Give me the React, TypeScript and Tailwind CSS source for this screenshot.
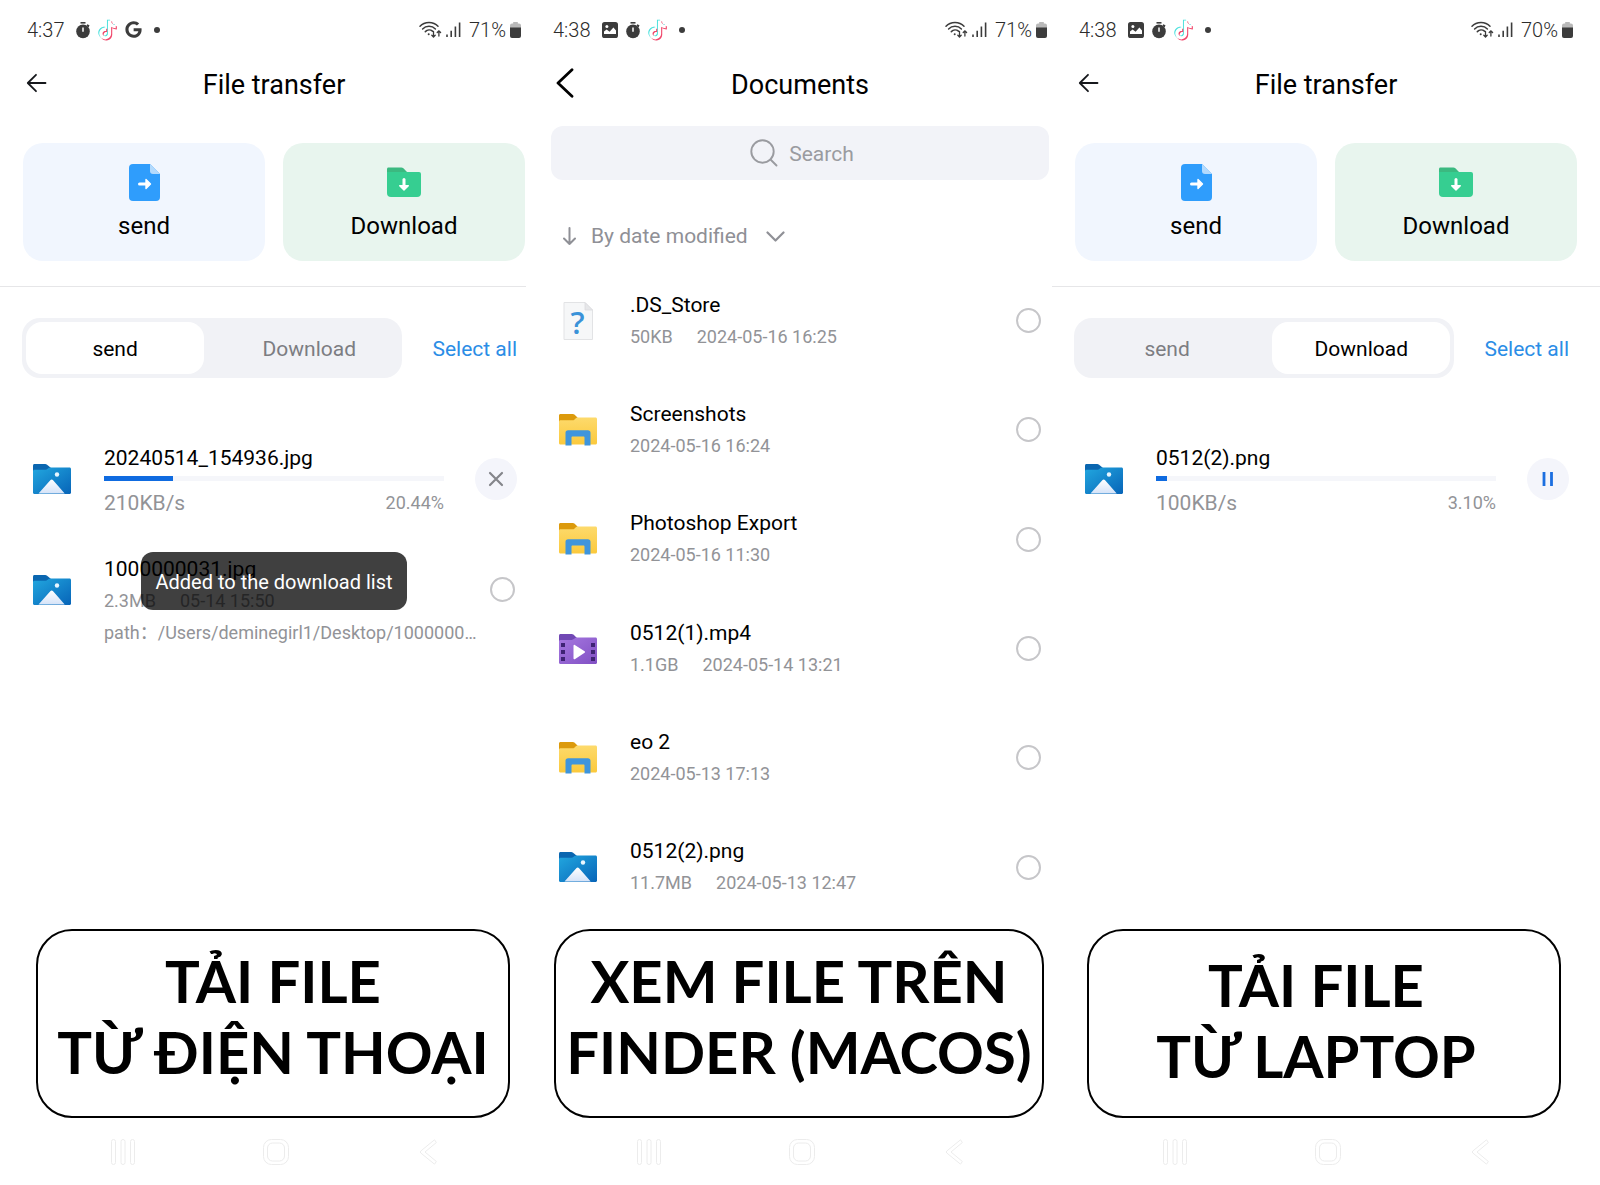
import type { ReactNode } from "react";
import { FaGoogle } from "react-icons/fa";

type FileKind = "unknown" | "folder" | "video" | "image";

const DOCUMENTS: { name: string; size?: string; date: string; kind: FileKind }[] = [
  { name: ".DS_Store", size: "50KB", date: "2024-05-16 16:25", kind: "unknown" },
  { name: "Screenshots", date: "2024-05-16 16:24", kind: "folder" },
  { name: "Photoshop Export", date: "2024-05-16 11:30", kind: "folder" },
  { name: "0512(1).mp4", size: "1.1GB", date: "2024-05-14 13:21", kind: "video" },
  { name: "eo 2", date: "2024-05-13 17:13", kind: "folder" },
  { name: "0512(2).png", size: "11.7MB", date: "2024-05-13 12:47", kind: "image" },
];

const NOTE =
  "M12.525.02c1.31-.02 2.61-.01 3.91-.02.08 1.53.63 3.09 1.75 4.17 1.12 1.11 2.7 1.62 4.24 1.79v4.03c-1.44-.05-2.89-.35-4.2-.97-.57-.26-1.1-.59-1.62-.93-.01 2.92.01 5.84-.02 8.75-.08 1.4-.54 2.79-1.35 3.94-1.31 1.92-3.58 3.17-5.91 3.21-1.43.08-2.86-.31-4.08-1.03-2.02-1.19-3.44-3.37-3.65-5.71-.02-.5-.03-1-.01-1.49.18-1.9 1.12-3.72 2.58-4.96 1.66-1.44 3.98-2.13 6.15-1.72.02 1.48-.04 2.96-.04 4.44-.99-.32-2.15-.23-3.02.37-.63.41-1.11 1.04-1.36 1.75-.21.51-.15 1.07-.14 1.61.24 1.64 1.82 3.02 3.5 2.87 1.12-.01 2.19-.66 2.77-1.61.19-.33.4-.67.41-1.06.1-1.79.06-3.57.07-5.36.01-4.03-.01-8.05.02-12.07z";

/* ---------- status bar ---------- */

function StopwatchIcon() {
  return (
    <svg width="14" height="18" viewBox="0 0 14 18" aria-hidden>
      <path d="M4.5 1h5v1.6h-5z" fill="#3c3c3c" />
      <path d="M11.2 3.2l2.3 1-.9 2.2-2-1.6z" fill="#3c3c3c" />
      <circle cx="7" cy="10.4" r="6.8" fill="#3c3c3c" />
      <path d="M7 6.6v4.2" stroke="#fff" strokeWidth="1.5" />
    </svg>
  );
}

function NoteIcon() {
  return (
    <svg width="19" height="22" viewBox="0 -1.800 24 27.800" aria-hidden>
      <path d={NOTE} fill="#45e0dc" transform="translate(-1.200 -1)" />
      <path d={NOTE} fill="#f0486c" transform="translate(1.400 1.400)" />
      <path d={NOTE} fill="#fff" />
    </svg>
  );
}

function PictureIcon() {
  return (
    <svg width="16" height="16" viewBox="0 0 16 16" aria-hidden>
      <rect width="16" height="16" rx="2.6" fill="#3c3c3c" />
      <circle cx="4.9" cy="4.5" r="1.5" fill="#fff" />
      <path d="M2 12.6V9.4l2.6-2 3 2.4 3.8-4.2L14 8.4v4.2z" fill="#fff" />
      <path d="M2 12h12v1.2H2z" fill="#3c3c3c" />
    </svg>
  );
}

function WifiIcon() {
  return (
    <svg width="23" height="17" viewBox="0 0 23 17" fill="none" stroke="#3c3c3c" strokeWidth="1.5" strokeLinecap="round" aria-hidden>
      <path d="M1 5.200C5.600.1 14.400.1 19 5.200" />
      <path d="M3.600 8c3.400-3.600 9.400-3.600 12.800 0" />
      <path d="M6.300 10.600c2-2 5.200-2 7.200-.4" />
      <circle cx="9.700" cy="13.200" r="1" fill="#3c3c3c" stroke="none" />
      <path d="M14.500 10.500v5.500M12.800 14.300l1.700 1.700 1.700-1.700M19.900 15v-5M18.200 11.500l1.700-1.700 1.700 1.700" strokeWidth="1.300" />
    </svg>
  );
}

function SignalIcon() {
  return (
    <svg width="15" height="15" viewBox="0 0 15 15" stroke="#3c3c3c" strokeWidth="1.6" aria-hidden>
      <path d="M1 12.600V15M5.200 8.800V15M9.400 4.600V15M13.600.4V15" />
    </svg>
  );
}

function BatteryIcon() {
  return (
    <svg width="11" height="16" viewBox="0 0 11 16" aria-hidden>
      <path d="M3.200 0h4.600v1.600H9A2 2 0 0 1 11 3.600V6H0V3.600a2 2 0 0 1 2-2h1.200z" fill="#b9b9b9" />
      <path d="M0 5.600h11V14a2 2 0 0 1-2 2H2a2 2 0 0 1-2-2z" fill="#3c3c3c" />
    </svg>
  );
}

function StatusBar({ time, battery, children }: { time: string; battery: string; children: ReactNode }) {
  return (
    <div className="flex h-[59px] items-center justify-between px-[27px] text-xl font-light text-[#2c2c2c]">
      <div className="flex items-center gap-2">
        <span className="mr-1">{time}</span>
        {children}
        <span className="ml-1 size-[6px] rounded-full bg-[#3c3c3c]" />
      </div>
      <div className="flex items-center gap-1">
        <WifiIcon />
        <SignalIcon />
        <span className="ml-1">{battery}</span>
        <BatteryIcon />
      </div>
    </div>
  );
}

/* ---------- file icons ---------- */

function ImageFolder() {
  return (
    <svg width="38" height="30" viewBox="0 0 38 30" aria-hidden>
      <defs>
        <linearGradient id="imgBody" x1="0" y1="0" x2="1" y2="1">
          <stop offset="0" stopColor="#22a7df" />
          <stop offset="1" stopColor="#0764b8" />
        </linearGradient>
        <linearGradient id="imgHill" x1="0" y1="0" x2="0" y2="1">
          <stop offset="0" stopColor="#fff" />
          <stop offset="1" stopColor="#d5e3f8" />
        </linearGradient>
      </defs>
      <path d="M1.500 0h10.700c.8 0 1.300.2 1.900.7L18 4v6H0V1.500C0 .6.6 0 1.500 0z" fill="#0a66b0" />
      <path d="M0 7.200c0-.9.6-1.500 1.500-1.500h11c.8 0 1.500-.3 2.200-.9l.8-.7c.5-.4 1-.6 1.700-.6h19.300c.9 0 1.500.6 1.500 1.500v23.500c0 .9-.6 1.500-1.500 1.500h-35C.6 30 0 29.400 0 28.500z" fill="url(#imgBody)" />
      <path d="M5.500 29.400L17.300 16.200c.8-.9 2-.9 2.800 0l11.600 13.200z" fill="url(#imgHill)" />
      <circle cx="24" cy="10.500" r="2.200" fill="#e9f6ff" />
    </svg>
  );
}

function ExplorerFolder() {
  return (
    <svg width="38" height="32" viewBox="0 0 38 32" aria-hidden>
      <defs>
        <linearGradient id="dirBody" x1="0" y1="0" x2="0" y2="1">
          <stop offset="0" stopColor="#fdda6c" />
          <stop offset="1" stopColor="#fbc93c" />
        </linearGradient>
      </defs>
      <path d="M1.500 0h12.400c.6 0 1.100.2 1.500.6L18.500 3.600V10H0V1.500C0 .6.6 0 1.500 0z" fill="#dc9a0c" />
      <path d="M0 7.800c0-.9.6-1.500 1.500-1.500h12c.8 0 1.500-.3 2.100-.9l1.200-1.200c.5-.5 1-.7 1.700-.7h18c.9 0 1.500.6 1.500 1.500V29c0 .9-.6 1.500-1.500 1.500h-35C.6 30.500 0 29.900 0 29z" fill="url(#dirBody)" />
      <path d="M6.500 31.500V18.800c0-1.600 1-2.600 2.600-2.600h19.800c1.600 0 2.600 1 2.600 2.600v12.700h-6v-8c0-.6-.4-1-1-1h-11c-.6 0-1 .4-1 1v8z" fill="#3f95dc" />
    </svg>
  );
}

function VideoFolder() {
  return (
    <svg width="38" height="30" viewBox="0 0 38 30" aria-hidden>
      <defs>
        <linearGradient id="vidBody" x1="0" y1="0" x2="1" y2="1">
          <stop offset="0" stopColor="#a678e0" />
          <stop offset="1" stopColor="#8150c4" />
        </linearGradient>
      </defs>
      <path d="M1.500 0h11.200c.7 0 1.200.2 1.700.6L18 4v6H0V1.500C0 .6.6 0 1.500 0z" fill="#7148b4" />
      <path d="M0 7.400c0-.9.6-1.500 1.500-1.500h11.300c.8 0 1.500-.3 2.100-.8l1-.8c.5-.5 1-.7 1.700-.7h18.900c.9 0 1.500.6 1.500 1.500v23.400c0 .9-.6 1.500-1.500 1.500h-35C.6 30 0 29.400 0 28.500z" fill="url(#vidBody)" />
      <path d="M2 9h4v4H2zM2 16h4v4H2zM2 23h4v4H2zM32 9h4v4h-4zM32 16h4v4h-4zM32 23h4v4h-4z" fill="#3f2374" />
      <path d="M14.500 11.700v12.800c0 .7.700 1.100 1.300.7l9.800-6.400c.5-.4.5-1.100 0-1.500l-9.800-6.300c-.6-.4-1.300 0-1.300.7z" fill="#fff" />
    </svg>
  );
}

function UnknownFile() {
  return (
    <svg width="38" height="38" viewBox="0 0 38 38" className="overflow-visible" aria-hidden>
      <path d="M5 .5h21L33.500 8v29.500H5z" fill="#f6f7f8" stroke="#e2e3e5" />
      <path d="M26 .5V8h7.500z" fill="#e6e7e9" stroke="#dadbdd" strokeWidth=".8" />
      <text x="18.500" y="31.500" textAnchor="middle" fontFamily="Open Sans" fontSize="31" fontWeight="600" fill="#3a92d8">?</text>
    </svg>
  );
}

function FileIcon({ kind }: { kind: FileKind }) {
  if (kind === "folder") return <ExplorerFolder />;
  if (kind === "video") return <VideoFolder />;
  if (kind === "unknown") return <UnknownFile />;
  return <ImageFolder />;
}

/* ---------- shared pieces ---------- */

function TitleBar({ title, back }: { title: string; back: ReactNode }) {
  return (
    <header className="grid h-[52px] grid-cols-[48px_1fr_48px] items-center">
      <button type="button" aria-label="Back" className="mb-1 flex justify-end">{back}</button>
      <h1 className="text-center text-[27px] leading-8 text-black">{title}</h1>
    </header>
  );
}

function ArrowBack() {
  return (
    <svg width="22" height="20" viewBox="0 0 22 20" fill="none" stroke="#16181c" strokeWidth="1.800" strokeLinecap="round" strokeLinejoin="round" aria-hidden>
      <path d="M19.500 10H2M10 1.800L1.800 10l8.200 8.200" />
    </svg>
  );
}

function ChevronBack() {
  return (
    <svg width="18" height="30" viewBox="0 0 18 30" fill="none" stroke="#000" strokeWidth="2.800" strokeLinecap="round" strokeLinejoin="round" aria-hidden>
      <path d="M16 1.800L2 15l14 13.200" />
    </svg>
  );
}

function Pick({ label }: { label: string }) {
  return (
    <input
      type="checkbox"
      aria-label={`Select ${label}`}
      className="size-[25px] shrink-0 appearance-none rounded-full border-2 border-[#c6c6c9] bg-white"
    />
  );
}

function NavBar() {
  return (
    <nav className="grid h-[67px] grid-cols-3 items-center justify-items-center pl-[47px] pr-[43px]">
      <button type="button" aria-label="Recents">
        <svg width="24" height="26" viewBox="0 0 24 26" fill="none" stroke="#ececec" aria-hidden>
          <rect x=".5" y=".5" width="4" height="25" rx="2" />
          <rect x="10" y=".5" width="4" height="25" rx="2" />
          <rect x="19.500" y=".5" width="4" height="25" rx="2" />
        </svg>
      </button>
      <button type="button" aria-label="Home">
        <svg width="26" height="26" viewBox="0 0 26 26" fill="none" stroke="#ececec" aria-hidden>
          <rect x=".5" y=".5" width="25" height="25" rx="8" />
          <rect x="4.500" y="4" width="17" height="18" rx="5" />
        </svg>
      </button>
      <button type="button" aria-label="Back">
        <svg width="17" height="26" viewBox="0 0 17 26" fill="none" stroke="#ececec" aria-hidden>
          <path d="M14.500.8L.8 12a1.400 1.400 0 0 0 0 2l13.700 11.200 1.900-2.700L5 13 16.400 3.500z" />
        </svg>
      </button>
    </nav>
  );
}

function Caption({ lines, className }: { lines: string[]; className: string }) {
  return (
    <div className={`mt-auto flex h-[189px] flex-col whitespace-nowrap rounded-[36px] border-2 border-black bg-white text-center font-[Lato,'Open_Sans',sans-serif] text-[58px] font-bold leading-[71px] text-black ${className}`}>
      {lines.map((line) => (
        <p key={line}>{line}</p>
      ))}
    </div>
  );
}

/* ---------- screens ---------- */

function TransferHead({ active }: { active: "send" | "download" }) {
  const on = "rounded-2xl bg-white pt-[3px] text-black";
  const off = "pt-[3px] text-[#7c7d82]";
  return (
    <>
      <TitleBar title="File transfer" back={<ArrowBack />} />
      <div className="mt-8 grid grid-cols-2 gap-[18px] px-[23px] text-2xl text-black">
        <button type="button" className="flex h-[118px] flex-col items-center rounded-[20px] bg-[#f1f6fe] pt-[21px]">
          <svg width="31" height="37" viewBox="0 0 31 37" aria-hidden>
            <path d="M4 0h17l10 10v23a4 4 0 0 1-4 4H4a4 4 0 0 1-4-4V4a4 4 0 0 1 4-4z" fill="#2f9dfc" />
            <path d="M21 0l10 10h-7a3 3 0 0 1-3-3z" fill="#b3dafd" />
            <path d="M10.500 20h8" stroke="#fff" strokeWidth="3" strokeLinecap="round" />
            <path d="M17 15.500l4.500 4.500-4.500 4.500z" fill="#fff" stroke="#fff" strokeWidth="1.400" strokeLinejoin="round" />
          </svg>
          <span className="mt-[7px] leading-9">send</span>
        </button>
        <button type="button" className="flex h-[118px] flex-col items-center rounded-[20px] bg-[#e8f5ee] pt-[21px]">
          <svg width="34" height="37" viewBox="0 0 34 37" aria-hidden>
            <path d="M1.500 3.500h12.800c.8 0 1.500.3 2.100.8L20 8v5H0V5c0-.9.6-1.500 1.500-1.500z" fill="#3bb980" />
            <path d="M0 8h32a2 2 0 0 1 2 2v19a4 4 0 0 1-4 4H4a4 4 0 0 1-4-4z" fill="#36ce91" />
            <path d="M17 15.500v7" stroke="#fff" strokeWidth="3" strokeLinecap="round" />
            <path d="M12.700 21.800h8.600L17 26z" fill="#fff" stroke="#fff" strokeWidth="1.400" strokeLinejoin="round" />
          </svg>
          <span className="mt-[7px] leading-9">Download</span>
        </button>
      </div>
      <hr className="mt-[25px] border-[#e6e6e8]" />
      <div className="mt-[31px] flex items-center gap-[30px] pl-[22px] pr-[31px] text-[21px]">
        <div role="tablist" className="grid h-[60px] flex-1 grid-cols-2 gap-4 rounded-[18px] bg-[#f1f2f6] p-1">
          <button type="button" role="tab" aria-selected={active === "send"} className={active === "send" ? on : off}>send</button>
          <button type="button" role="tab" aria-selected={active === "download"} className={active === "download" ? on : off}>Download</button>
        </div>
        <button type="button" className="pt-[3px] text-[#2b8de6]">Select all</button>
      </div>
    </>
  );
}

function TransferRow({ name, speed, percent, action }: { name: string; speed: string; percent: number; action: ReactNode }) {
  return (
    <li className="flex h-[111px] items-center pl-[33px] pr-[31px]">
      <ImageFolder />
      <div className="ml-[33px] min-w-0 flex-1 pt-1">
        <p className="text-[21px] leading-7 text-black">{name}</p>
        <div role="progressbar" aria-label={name} aria-valuenow={percent} className="mt-1 h-[5px] bg-[#f5f6fa]">
          <div className="h-full bg-[#0f6be0]" style={{ width: `${percent}%` }} />
        </div>
        <div className="mt-2 flex items-center justify-between text-[#929397]">
          <span className="text-[21px] leading-7">{speed}</span>
          <span className="text-lg leading-6">{percent.toFixed(2)}%</span>
        </div>
      </div>
      {action}
    </li>
  );
}

const ACTION = "ml-[31px] flex size-[42px] shrink-0 items-center justify-center rounded-full bg-[#f4f5fb]";

function SendScreen() {
  return (
    <section className="flex min-w-0 flex-1 flex-col bg-white">
      <StatusBar time="4:37" battery="71%">
        <StopwatchIcon />
        <NoteIcon />
        <FaGoogle size={17} color="#3c3c3c" />
      </StatusBar>
      <TransferHead active="send" />
      <div className="relative mt-[45px]">
        <ul>
          <TransferRow
            name="20240514_154936.jpg"
            speed="210KB/s"
            percent={20.44}
            action={
              <button type="button" aria-label="Cancel" className={ACTION}>
                <svg width="16" height="16" viewBox="0 0 16 16" stroke="#85868b" strokeWidth="2.200" strokeLinecap="round" aria-hidden>
                  <path d="M2 2l12 12M14 2L2 14" />
                </svg>
              </button>
            }
          />
          <li className="flex h-[111px] items-center pl-[33px] pr-[33px]">
            <ImageFolder />
            <div className="ml-[33px] mr-2 min-w-0 flex-1 self-start pt-[19px] text-lg leading-8 text-[#929397]">
              <p className="text-[21px] leading-8 text-black">1000000031.jpg</p>
              <p className="flex gap-6">
                <span>2.3MB</span>
                <span>05-14 15:50</span>
              </p>
              <p className="truncate">path：/Users/deminegirl1/Desktop/1000000031.jpg</p>
            </div>
            <Pick label="1000000031.jpg" />
          </li>
        </ul>
        <div className="absolute inset-x-0 top-[129px] flex justify-center">
          <p role="status" className="rounded-xl bg-black/75 px-[14px] pb-3 pt-[14px] text-xl leading-8 text-white">
            Added to the download list
          </p>
        </div>
      </div>
      <Caption lines={["TẢI FILE", "TỪ ĐIỆN THOẠI"]} className="ml-9 mr-[38px] pt-[14px]" />
      <NavBar />
    </section>
  );
}

function DocumentsScreen() {
  return (
    <section className="z-10 -ml-[22px] flex min-w-0 flex-1 flex-col bg-white">
      <StatusBar time="4:38" battery="71%">
        <PictureIcon />
        <StopwatchIcon />
        <NoteIcon />
      </StatusBar>
      <TitleBar title="Documents" back={<ChevronBack />} />
      <label className="mx-[25px] mt-[15px] flex h-[54px] items-center justify-center gap-[11px] rounded-xl bg-[#f2f3f8] pl-1">
        <svg width="28" height="28" viewBox="0 0 28 28" fill="none" stroke="#9a9ba0" strokeWidth="1.900" strokeLinecap="round" aria-hidden>
          <circle cx="12.500" cy="12.500" r="11.200" />
          <path d="M20.500 20.500l6 6" />
        </svg>
        <input type="search" aria-label="Search" placeholder="Search" className="field-sizing-content pt-[2px] text-[21px] leading-7 outline-none placeholder:text-[#9a9ba0]" />
      </label>
      <div className="mt-[29px] flex h-[54px] items-center pl-[37px] text-[#8f9096]">
        <svg width="13" height="18" viewBox="0 0 13 18" fill="none" stroke="currentColor" strokeWidth="2" strokeLinecap="round" strokeLinejoin="round" aria-hidden>
          <path d="M6.500 1v16M1 11.500L6.500 17l5.500-5.500" />
        </svg>
        <select aria-label="Sort order" className="ml-[15px] appearance-none bg-transparent text-[21px] leading-7">
          <option>By date modified</option>
        </select>
        <svg className="ml-[18px]" width="19" height="11" viewBox="0 0 19 11" fill="none" stroke="currentColor" strokeWidth="2.200" strokeLinecap="round" strokeLinejoin="round" aria-hidden>
          <path d="M1.500 1.500l8 8 8-8" />
        </svg>
      </div>
      <ul className="mb-[7px] mt-[3px] grid flex-1 auto-rows-fr">
        {DOCUMENTS.map((doc) => (
          <li key={doc.name} className="flex items-center px-[33px]">
            <FileIcon kind={doc.kind} />
            <div className="ml-[33px] flex-1 text-lg leading-8 text-[#929397]">
              <p className="text-[21px] leading-8 text-black">{doc.name}</p>
              <p className="flex gap-6">
                {doc.size && <span>{doc.size}</span>}
                <span>{doc.date}</span>
              </p>
            </div>
            <Pick label={doc.name} />
          </li>
        ))}
      </ul>
      <Caption lines={["XEM FILE TRÊN", "FINDER (MACOS)"]} className="ml-7 mr-[30px] pt-[14px]" />
      <NavBar />
    </section>
  );
}

function DownloadScreen() {
  return (
    <section className="z-20 -ml-[22px] flex min-w-0 flex-1 flex-col bg-white">
      <StatusBar time="4:38" battery="70%">
        <PictureIcon />
        <StopwatchIcon />
        <NoteIcon />
      </StatusBar>
      <TransferHead active="download" />
      <ul className="mt-[45px]">
        <TransferRow
          name="0512(2).png"
          speed="100KB/s"
          percent={3.1}
          action={
            <button type="button" aria-label="Pause" className={ACTION}>
              <svg width="12" height="16" viewBox="0 0 12 16" stroke="#1c6fe0" strokeWidth="2.800" aria-hidden>
                <path d="M2 1v14M9.500 1v14" />
              </svg>
            </button>
          }
        />
      </ul>
      <Caption lines={["TẢI FILE", "TỪ LAPTOP"]} className="ml-[35px] mr-[39px] pr-4 pt-[18px]" />
      <NavBar />
    </section>
  );
}

export default function App() {
  return (
    <main className="flex min-h-screen overflow-hidden bg-white font-[Roboto,'Noto_Sans_CJK_SC',sans-serif]">
      <SendScreen />
      <DocumentsScreen />
      <DownloadScreen />
    </main>
  );
}
